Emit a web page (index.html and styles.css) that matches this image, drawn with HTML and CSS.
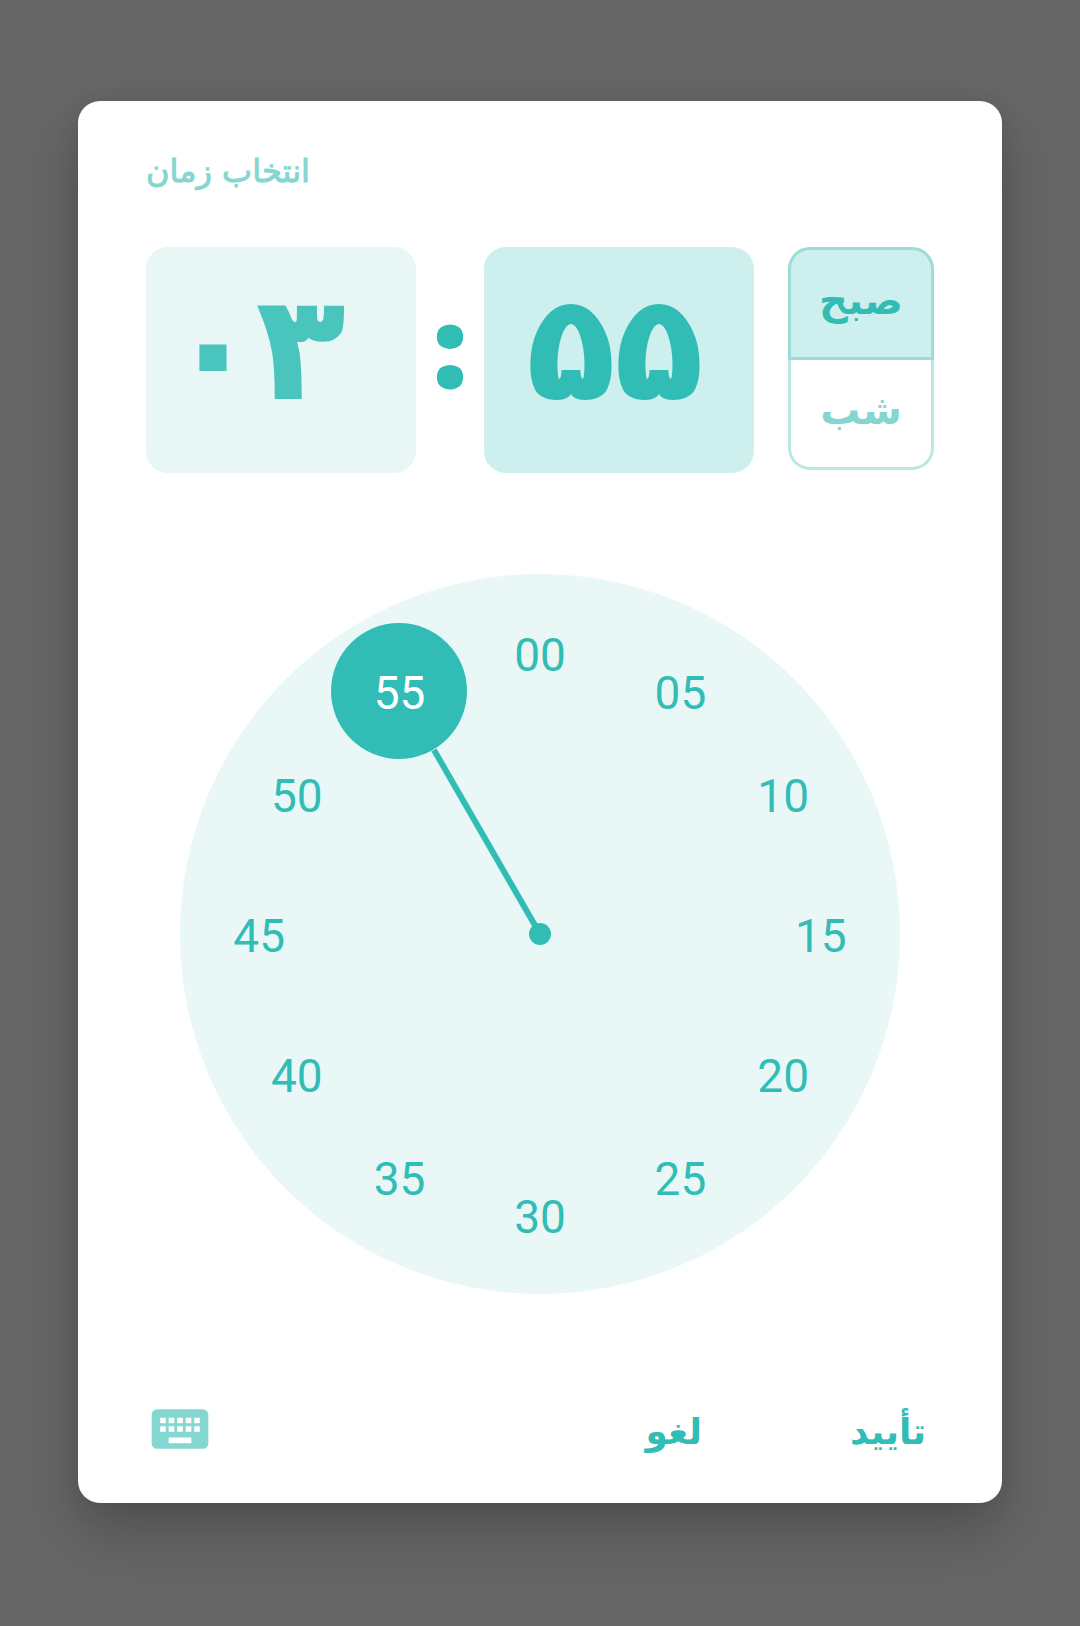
FILE: index.html
```html
<!DOCTYPE html>
<html lang="fa">
<head>
<meta charset="utf-8">
<meta name="viewport" content="width=device-width, initial-scale=1">
<title>انتخاب زمان</title>
<link rel="stylesheet" href="styles.css">
</head>
<body>
<form class="dialog" role="dialog" aria-labelledby="title">
  <h1 class="title" id="title" dir="rtl">انتخاب زمان</h1>

  <div class="time">
    <div class="fields">
      <button type="button" class="field">۰۳</button>
      <span class="colon">:</span>
      <button type="button" class="field field-active">۵۵</button>
    </div>
    <div class="period" role="radiogroup">
      <input class="period-input" type="radio" name="period" id="am" checked>
      <label class="period-option" for="am">صبح</label>
      <input class="period-input" type="radio" name="period" id="pm">
      <label class="period-option" for="pm">شب</label>
    </div>
  </div>

  <div class="dial">
    <svg class="hand" viewBox="0 0 720 720" aria-hidden="true">
      <line x1="360" y1="360" x2="254" y2="176" stroke="currentColor" stroke-width="6"/>
      <circle cx="360" cy="360" r="11" fill="currentColor"/>
      <circle cx="219" cy="117" r="68" fill="currentColor"/>
    </svg>
    <button type="button" class="minute" style="--angle:0deg">00</button>
    <button type="button" class="minute" style="--angle:30deg">05</button>
    <button type="button" class="minute" style="--angle:60deg">10</button>
    <button type="button" class="minute" style="--angle:90deg">15</button>
    <button type="button" class="minute" style="--angle:120deg">20</button>
    <button type="button" class="minute" style="--angle:150deg">25</button>
    <button type="button" class="minute" style="--angle:180deg">30</button>
    <button type="button" class="minute" style="--angle:210deg">35</button>
    <button type="button" class="minute" style="--angle:240deg">40</button>
    <button type="button" class="minute" style="--angle:270deg">45</button>
    <button type="button" class="minute" style="--angle:300deg">50</button>
    <button type="button" class="minute minute-active" style="--angle:330deg">55</button>
  </div>

  <div class="actions">
    <button type="button" class="keyboard" aria-label="صفحه‌کلید">
      <svg class="keyboard-icon" viewBox="0 0 24 24" aria-hidden="true"><path fill="currentColor" d="M20 5H4c-1.1 0-1.99.9-1.99 2L2 17c0 1.1.9 2 2 2h16c1.1 0 2-.9 2-2V7c0-1.1-.9-2-2-2zm-9 3h2v2h-2V8zm0 3h2v2h-2v-2zM8 8h2v2H8V8zm0 3h2v2H8v-2zm-1 2H5v-2h2v2zm0-3H5V8h2v2zm9 7H8v-2h8v2zm0-4h-2v-2h2v2zm0-3h-2V8h2v2zm3 3h-2v-2h2v2zm0-3h-2V8h2v2z"/></svg>
    </button>
    <button type="button" class="action">لغو</button>
    <button type="submit" class="action">تأیید</button>
  </div>
</form>
</body>
</html>
```
FILE: styles.css
```css
:root {
  --teal: #31bdb5;
  --teal-digits: #49c5be;
  --teal-soft: #84d7d1;
  --teal-pale: #cdefed;
  --teal-faint: #e8f7f6;
}

* {
  box-sizing: border-box;
}

body {
  margin: 0;
  padding: 101px 78px;
  background: #666;
  color: var(--teal);
  font-family: "DejaVu Sans", sans-serif;
}

button {
  margin: 0;
  padding: 0;
  border: 0;
  background: none;
  color: inherit;
  font: inherit;
  cursor: pointer;
}

.dialog {
  padding: 48px 68px 40px;
  border-radius: 22px;
  background: #fff;
  box-shadow: 0 30px 60px rgba(0, 0, 0, 0.2), 0 6px 24px rgba(0, 0, 0, 0.08);
}

.title {
  margin: 0;
  color: var(--teal-soft);
  font-size: 32px;
  font-weight: 400;
  line-height: 44px;
  text-align: left;
  -webkit-text-stroke: 1px currentColor;
}

.time {
  display: flex;
  gap: 34px;
  margin-top: 54px;
}

.fields {
  display: grid;
  flex: 1;
  grid-template-columns: 1fr 68px 1fr;
}

.field {
  height: 226px;
  padding: 0 48px 24px 0;
  border-radius: 22px;
  background: var(--teal-faint);
  color: var(--teal-digits);
  font-size: 144px;
  font-weight: 700;
  line-height: 1;
  -webkit-text-stroke: 2px currentColor;
}

.field-active {
  padding-right: 8px;
  background: var(--teal-pale);
  color: var(--teal);
}

.colon {
  align-self: center;
  padding-bottom: 28px;
  font-family: "Open Sans", sans-serif;
  font-size: 104px;
  font-weight: 800;
  line-height: 1;
  text-align: center;
  -webkit-text-stroke: 5px currentColor;
}

.period {
  display: flex;
  flex-direction: column;
  width: 146px;
  height: 223px;
}

.period-input {
  position: absolute;
  opacity: 0;
}

.period-option {
  display: flex;
  flex: 1;
  align-items: center;
  justify-content: center;
  padding-bottom: 8px;
  border: 3px solid #bce8e4;
  color: var(--teal-soft);
  font-size: 40px;
  font-weight: 700;
  cursor: pointer;
}

.period-option:first-of-type {
  border-radius: 22px 22px 0 0;
}

.period-option:last-of-type {
  border-top: 0;
  border-radius: 0 0 22px 22px;
}

.period-input:checked + .period-option {
  border-color: #9bddd8;
  background: var(--teal-pale);
  color: var(--teal);
}

.dial {
  position: relative;
  width: 92%;
  max-width: 720px;
  aspect-ratio: 1;
  margin: 101px auto 0;
  border-radius: 50%;
  background: #e9f8f7;
}

.hand {
  display: block;
  width: 100%;
}

.minute {
  position: absolute;
  top: calc(50% - 39% * cos(var(--angle)));
  left: calc(50% + 39% * sin(var(--angle)));
  padding-top: 4px;
  transform: translate(-50%, -50%);
  font-family: Roboto, sans-serif;
  font-size: 46px;
  line-height: 56px;
}

.minute-active {
  color: #fff;
}

.actions {
  display: flex;
  align-items: center;
  gap: 148px;
  margin-top: 101px;
  padding-right: 8px;
}

.keyboard {
  margin-right: auto;
  color: var(--teal-soft);
}

.keyboard-icon {
  display: block;
  width: 68px;
  height: 68px;
}

.action {
  padding-top: 6px;
  font-size: 36px;
  font-weight: 700;
  line-height: 48px;
}
```
